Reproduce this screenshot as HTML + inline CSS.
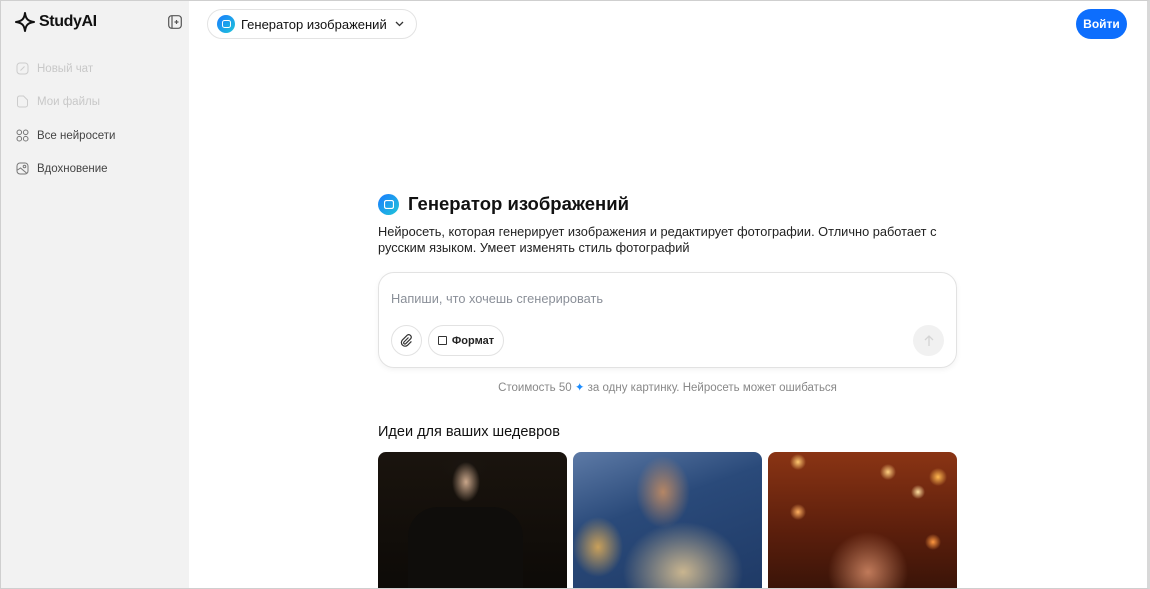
<!DOCTYPE html>
<html style="overflow:hidden;height:589px"><head><meta charset="utf-8"><style>
*{box-sizing:border-box;margin:0;padding:0}
body{width:1150px;height:589px;overflow:hidden;background:#fff;font-family:"Liberation Sans","Noto Sans CJK SC",sans-serif;position:relative;color:#111}
.frame{position:absolute;inset:0;border:1px solid #cfcfcf;border-right:3px solid #d8d8d8;pointer-events:none;z-index:9}
.side{position:absolute;left:0;top:0;width:189px;height:589px;background:#f2f2f2}
.logo{position:absolute;left:15px;top:12px;display:flex;align-items:center;font-size:16px;font-weight:bold;letter-spacing:-0.4px}
.logo svg{margin-right:4px}
.nav{position:absolute;left:16px;font-size:11.5px;display:flex;align-items:center}
.nav svg{margin-right:8px}
.pill{position:absolute;left:207px;top:9px;width:210px;height:30px;border:1px solid #e3e3e3;border-radius:15px;display:flex;align-items:center;padding-left:9px;font-size:13px}
.ic{width:18px;height:18px;border-radius:50%;background:linear-gradient(135deg,#1a7bff,#1fc6d8);display:inline-flex;align-items:center;justify-content:center}
.btn{position:absolute;left:1076px;top:9px;width:51px;height:30px;border-radius:15px;background:#0d6efd;color:#fff;font-size:12px;font-weight:bold;display:flex;align-items:center;justify-content:center}
.h1{position:absolute;left:378px;top:193px;display:flex;align-items:center;font-size:18.5px;font-weight:bold}
.desc{position:absolute;left:378px;top:224px;width:585px;font-size:12.8px;line-height:16px;color:#222}
.box{position:absolute;left:378px;top:272px;width:579px;height:96px;border:1px solid #e2e2e2;border-radius:16px;box-shadow:0 2px 6px rgba(0,0,0,.05)}
.ph{position:absolute;left:12px;top:18px;font-size:12.8px;color:#8a8f98}
.clip{position:absolute;left:12px;top:52px;width:31px;height:31px;border:1px solid #e2e2e2;border-radius:50%;display:flex;align-items:center;justify-content:center}
.fmt{position:absolute;left:49px;top:52px;width:76px;height:31px;border:1px solid #e2e2e2;border-radius:16px;display:flex;align-items:center;justify-content:center;font-size:11px;font-weight:bold;color:#222}
.fmt i{width:9px;height:9px;border:1px solid #333;border-radius:1px;margin-right:5px}
.send{position:absolute;left:534px;top:52px;width:31px;height:31px;border-radius:50%;background:#f1f1f1;display:flex;align-items:center;justify-content:center}
.cost{position:absolute;left:378px;top:380px;width:579px;text-align:center;font-size:11.5px;color:#888}
.ideas{position:absolute;left:378px;top:424px;font-size:14.5px;color:#111}
.img{position:absolute;top:452px;width:189px;height:137px;border-radius:8px 8px 0 0;overflow:hidden}
</style></head><body>
<div class="side">
 <div class="logo"><svg width="20" height="20" viewBox="0 0 20 20"><path d="M10 1 C10.8 7 13 9.2 19 10 C13 10.8 10.8 13 10 19 C9.2 13 7 10.8 1 10 C7 9.2 9.2 7 10 1Z" fill="none" stroke="#111" stroke-width="2" stroke-linejoin="round"/></svg>StudyAI</div>
 <svg style="position:absolute;left:168px;top:15px" width="14" height="14" viewBox="0 0 14 14"><rect x="0.7" y="0.7" width="12.6" height="12.6" rx="3" fill="none" stroke="#555" stroke-width="1.2"/><line x1="4" y1="1" x2="4" y2="13" stroke="#555" stroke-width="1.2"/><path d="M6.5 7h4M8.5 5v4" stroke="#555" stroke-width="1.2"/></svg>
 <div class="nav" style="top:62px;color:#c8c8c8"><svg width="13" height="13" viewBox="0 0 13 13"><rect x="1" y="1" width="11" height="11" rx="3" fill="none" stroke="#ccc"/><path d="M4.5 8.5l4-4" stroke="#ccc"/></svg>Новый чат</div>
 <div class="nav" style="top:95px;color:#c8c8c8"><svg width="13" height="13" viewBox="0 0 13 13"><path d="M1.5 3a2 2 0 012-2h4l4 4v5a2 2 0 01-2 2h-6a2 2 0 01-2-2z" fill="none" stroke="#ccc"/></svg>Мои файлы</div>
 <div class="nav" style="top:129px;color:#444"><svg width="13" height="13" viewBox="0 0 13 13" fill="none" stroke="#777"><circle cx="3.3" cy="3.3" r="2.3"/><circle cx="9.7" cy="3.3" r="2.3"/><circle cx="3.3" cy="9.7" r="2.3"/><circle cx="9.7" cy="9.7" r="2.3"/></svg>Все нейросети</div>
 <div class="nav" style="top:162px;color:#444"><svg width="13" height="13" viewBox="0 0 13 13" fill="none" stroke="#777"><rect x="1" y="1" width="11" height="11" rx="3"/><path d="M1.5 8l3-2 6 5"/><circle cx="8.5" cy="4.5" r="1.3"/></svg>Вдохновение</div>
</div>
<div class="pill"><span class="ic"><svg width="9" height="8" viewBox="0 0 9 8"><rect x="0.5" y="0.5" width="8" height="7" rx="2" fill="none" stroke="#fff"/></svg></span><span style="margin-left:6px">Генератор изображений</span><svg style="margin-left:8px" width="9" height="6" viewBox="0 0 9 6"><path d="M1 1l3.5 3.5L8 1" fill="none" stroke="#333" stroke-width="1.3"/></svg></div>
<div class="btn">Войти</div>
<div class="h1"><span class="ic" style="width:21px;height:21px"><svg width="10" height="9" viewBox="0 0 10 9"><rect x="0.5" y="0.5" width="9" height="8" rx="2" fill="none" stroke="#fff" stroke-width="1.2"/></svg></span><span style="margin-left:9px">Генератор изображений</span></div>
<div class="desc">Нейросеть, которая генерирует изображения и редактирует фотографии. Отлично работает с русским языком. Умеет изменять стиль фотографий</div>
<div class="box">
 <div class="ph">Напиши, что хочешь сгенерировать</div>
 <div class="clip"><svg width="13" height="13" viewBox="0 0 13 13"><path d="M8.5 3.5l-4.5 4.5a1.2 1.2 0 001.7 1.7l5-5a2.5 2.5 0 00-3.5-3.5l-5 5a3.7 3.7 0 005.2 5.2l4-4" fill="none" stroke="#333" stroke-width="1.2"/></svg></div>
 <div class="fmt"><i></i>Формат</div>
 <div class="send"><svg width="12" height="12" viewBox="0 0 12 12"><path d="M6 11V1M2 5l4-4 4 4" fill="none" stroke="#d4d4d4" stroke-width="1.3"/></svg></div>
</div>
<div class="cost">Стоимость 50 <span style="color:#1a8cff">✦</span> за одну картинку. Нейросеть может ошибаться</div>
<div class="ideas">Идеи для ваших шедевров</div>
<div class="img" style="left:378px;background:radial-gradient(ellipse 14px 20px at 88px 30px,#c9a68a,transparent),radial-gradient(ellipse 25px 18px at 86px 12px,#1a1510,transparent),linear-gradient(#1a140e,#0d0a07)"><div style="position:absolute;left:30px;top:55px;width:115px;height:100px;background:#0f0d0b;border-radius:30px 30px 0 0"></div></div>
<div class="img" style="left:573px;background:radial-gradient(ellipse 30px 40px at 90px 40px,#b58665,transparent 90%),radial-gradient(ellipse 60px 50px at 110px 120px,#c9b58f,transparent),radial-gradient(ellipse 25px 30px at 25px 95px,#c9a05a,transparent),linear-gradient(160deg,#5d7aa6 0%,#2a4a7a 40%,#1f3a66 100%)"></div>
<div class="img" style="left:768px;background:radial-gradient(circle 40px at 100px 120px,#c07a5a,transparent),radial-gradient(circle 8px at 30px 10px,#ffc870,transparent),radial-gradient(circle 8px at 120px 20px,#ffd080,transparent),radial-gradient(circle 7px at 150px 40px,#ffe0a0,transparent),radial-gradient(circle 8px at 30px 60px,#ffb060,transparent),radial-gradient(circle 9px at 170px 25px,#ffb850,transparent),radial-gradient(circle 8px at 165px 90px,#ff9840,transparent),linear-gradient(#8a3414,#5a1e0c 60%,#3a1408)"></div>
<div class="frame"></div>
</body></html>
